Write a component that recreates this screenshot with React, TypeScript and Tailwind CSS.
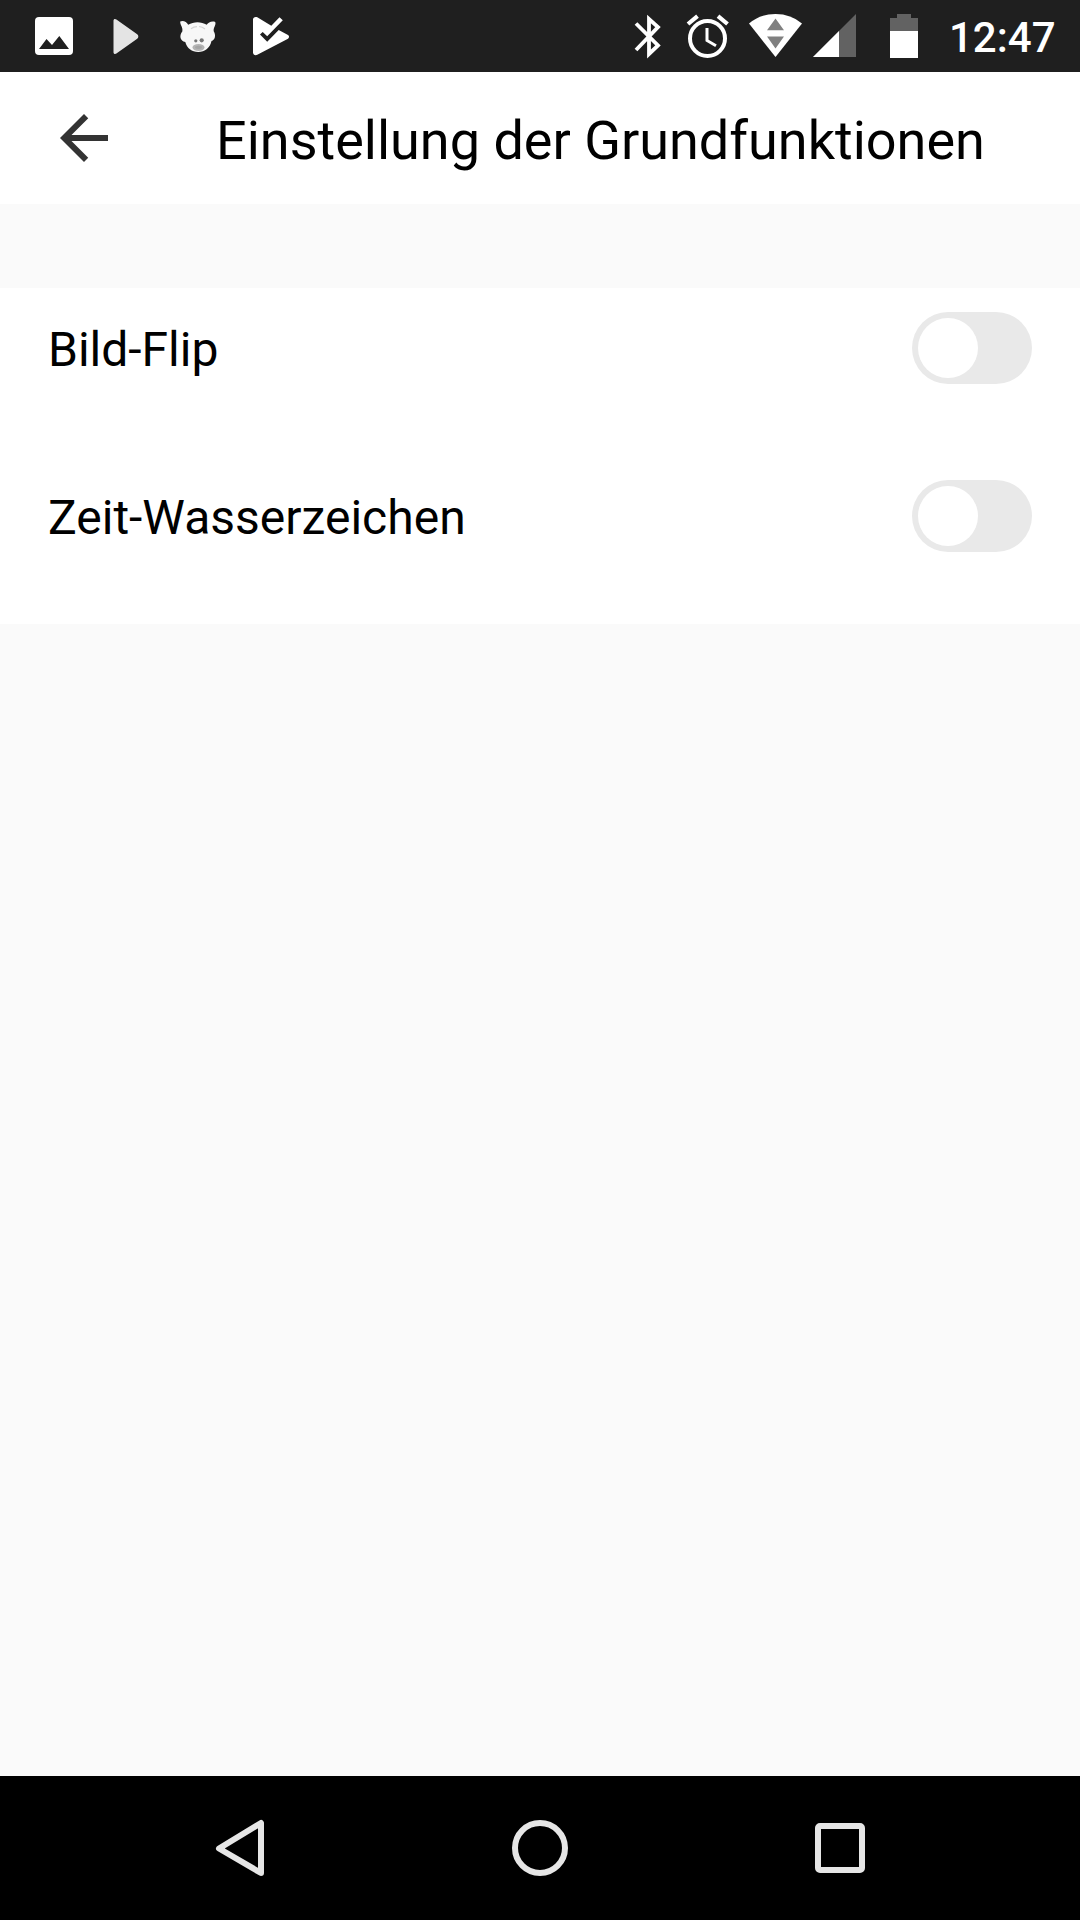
import { useState } from "react";

interface SettingRowProps {
  label: string;
  checked: boolean;
  onChange: () => void;
}

function NotificationIcons() {
  return (
    <div className="flex">
      {/* Screenshot */}
      <svg width="72" height="72" viewBox="0 0 72 72">
        <rect x="17" y="17" width="38" height="38" rx="4" fill="#fff" />
        <path d="M21 49l7.5-10 5.5 6 7.3-9 9.7 13z" fill="#1f1f1f" />
      </svg>
      {/* Play Store */}
      <svg width="72" height="72" viewBox="0 0 72 72">
        <path
          d="M23.5 20.800c0-1.800 1.500-2.300 2.900-1.300l20.800 14.700c1.500 1.200 1.500 3.400 0 4.600L26.400 53.600c-1.400 1-2.900.3-2.900-1.400z"
          fill="#e4e4e4"
        />
      </svg>
      {/* Pig */}
      <svg width="72" height="72" viewBox="0 0 72 72">
        <path
          d="M18.200 21.500c2.800-1.600 6.500.3 8 3.300 5.500-3.500 13-3.500 18.500 0 1.500-2.300 5-4 8.500-2.800 1.300 3-2.200 5.700-1.400 9.500 2.200 3.500 1.500 8.500-2.300 9.500-1.200 6.500-6.500 11-13.300 11-6.400 0-11.200-3.800-12.900-10-5.300-1-6.300-6.500-3-10.500 1-4-2.300-6.500-2.100-10z"
          fill="#f7f7f7"
        />
        <path
          d="M29 28.700c2-1.500 4-2.100 6-2.100M37 26.500c2.500.2 4.500 1.200 6 2.500"
          fill="none"
          stroke="#d4d4d4"
          strokeWidth="1.200"
        />
        <circle cx="33.800" cy="40.800" r="1.600" fill="#777" />
        <circle cx="39.700" cy="40.300" r="2.100" fill="#777" />
        <ellipse cx="36.500" cy="47.500" rx="6" ry="3.400" fill="#b4b4b4" />
        <ellipse cx="36.500" cy="47.300" rx="3.500" ry="1.600" fill="#a4a4a4" />
      </svg>
      {/* Play Protect */}
      <svg width="72" height="72" viewBox="0 0 72 72">
        <path
          d="M19 19.500c0-2.200 2.300-3.200 4.300-2.200L37.300 25.700l8.200-8.500 3.300 3L33.200 36.300 28.700 32 26 34.500l7.200 7.200L44.700 30l9.300 5c1.400.9 1.400 2.800 0 3.800L23.300 54.700c-2 1.100-4.300 0-4.300-2.200z"
          fill="#fff"
        />
      </svg>
    </div>
  );
}

function SystemIcons() {
  return (
    <div className="flex">
      {/* Bluetooth */}
      <svg width="48" height="72" viewBox="0 0 48 72">
        <path
          d="M12 23.500L34 45.500 25 54V19L34 27 12 50"
          fill="none"
          stroke="#fff"
          strokeWidth="3.800"
        />
      </svg>
      {/* Alarm */}
      <svg width="72" height="72" viewBox="0 0 72 72">
        <circle
          cx="35.500"
          cy="38.500"
          r="17.500"
          fill="none"
          stroke="#fff"
          strokeWidth="4"
        />
        <path
          d="M35 28v12.500l9 5.300"
          fill="none"
          stroke="#fff"
          strokeWidth="3"
        />
        <path
          d="M16 24l9.500-7.800M55.500 24L46 16.200"
          fill="none"
          stroke="#fff"
          strokeWidth="4.200"
        />
      </svg>
      {/* Wifi */}
      <svg width="64" height="72" viewBox="0 0 64 72">
        <path d="M5 23.500Q16 14 31.500 14T58 23.500L31.500 57z" fill="#fff" />
        <path d="M31.500 18.500L40 30.300H23zM23 36.500h17l-8.500 12z" fill="#808080" />
      </svg>
      {/* Mobile signal */}
      <svg width="54" height="72" viewBox="0 0 54 72">
        <path d="M48 14v43H5z" fill="#626262" />
        <path d="M31 31v26H5z" fill="#fff" />
      </svg>
      {/* Battery */}
      <svg width="76" height="72" viewBox="0 0 76 72">
        <path d="M35 14h14v4h7v13H28V18h7z" fill="#626262" />
        <path d="M28 31h28v27H28z" fill="#fff" />
      </svg>
    </div>
  );
}

function StatusBar() {
  return (
    <div className="flex h-[72px] items-center justify-between bg-[#1f1f1f] pl-[18px] pr-9">
      <NotificationIcons />
      <div className="flex items-center">
        <SystemIcons />
        <span className="w-[106px] whitespace-nowrap pl-[11px] pt-1 text-[42px] font-medium leading-none text-white">
          12:47
        </span>
      </div>
    </div>
  );
}

function Header() {
  return (
    <header className="flex h-[132px] items-center bg-white pl-12">
      <button type="button" aria-label="Zurück">
        <svg width="72" height="72" viewBox="0 0 24 24" fill="#333">
          <path d="M20 11H7.830l5.590-5.590L12 4l-8 8 8 8 1.410-1.410L7.830 13H20z" />
        </svg>
      </button>
      <h1 className="ml-24 pt-1.5 text-[54px] leading-none text-black">
        Einstellung der Grundfunktionen
      </h1>
    </header>
  );
}

function SettingRow({ label, checked, onChange }: SettingRowProps) {
  return (
    <div className="flex h-[168px] items-start justify-between px-12 pt-6">
      <span className="pt-[2px] text-5xl leading-[72px] text-black">
        {label}
      </span>
      <button
        type="button"
        role="switch"
        aria-checked={checked}
        aria-label={label}
        onClick={onChange}
        className={`flex h-[72px] w-[120px] items-center rounded-full p-1.5 ${
          checked ? "justify-end bg-green-500" : "justify-start bg-[#e9e9e9]"
        }`}
      >
        <span className="size-[60px] rounded-full bg-white" />
      </button>
    </div>
  );
}

function NavigationBar() {
  return (
    <nav className="grid h-36 grid-cols-3 items-center justify-items-center bg-black px-[90px]">
      <svg width="72" height="72" viewBox="0 0 72 72">
        <path
          d="M57 11v50L15 36.500z"
          fill="none"
          stroke="#e6e6e6"
          strokeWidth="6"
          strokeLinejoin="round"
        />
      </svg>
      <span className="size-14 rounded-full border-[6px] border-[#e6e6e6]" />
      <span className="size-[50px] rounded-[5px] border-[6px] border-[#e6e6e6]" />
    </nav>
  );
}

export default function App() {
  const [flip, setFlip] = useState(false);
  const [watermark, setWatermark] = useState(false);

  return (
    <div className="flex h-[1920px] w-[1080px] flex-col overflow-hidden bg-[#fafafa] font-[Roboto,sans-serif]">
      <StatusBar />
      <Header />
      <main className="mt-[84px] flex-1">
        <div className="bg-white">
          <SettingRow
            label="Bild-Flip"
            checked={flip}
            onChange={() => setFlip(!flip)}
          />
          <SettingRow
            label="Zeit-Wasserzeichen"
            checked={watermark}
            onChange={() => setWatermark(!watermark)}
          />
        </div>
      </main>
      <NavigationBar />
    </div>
  );
}
